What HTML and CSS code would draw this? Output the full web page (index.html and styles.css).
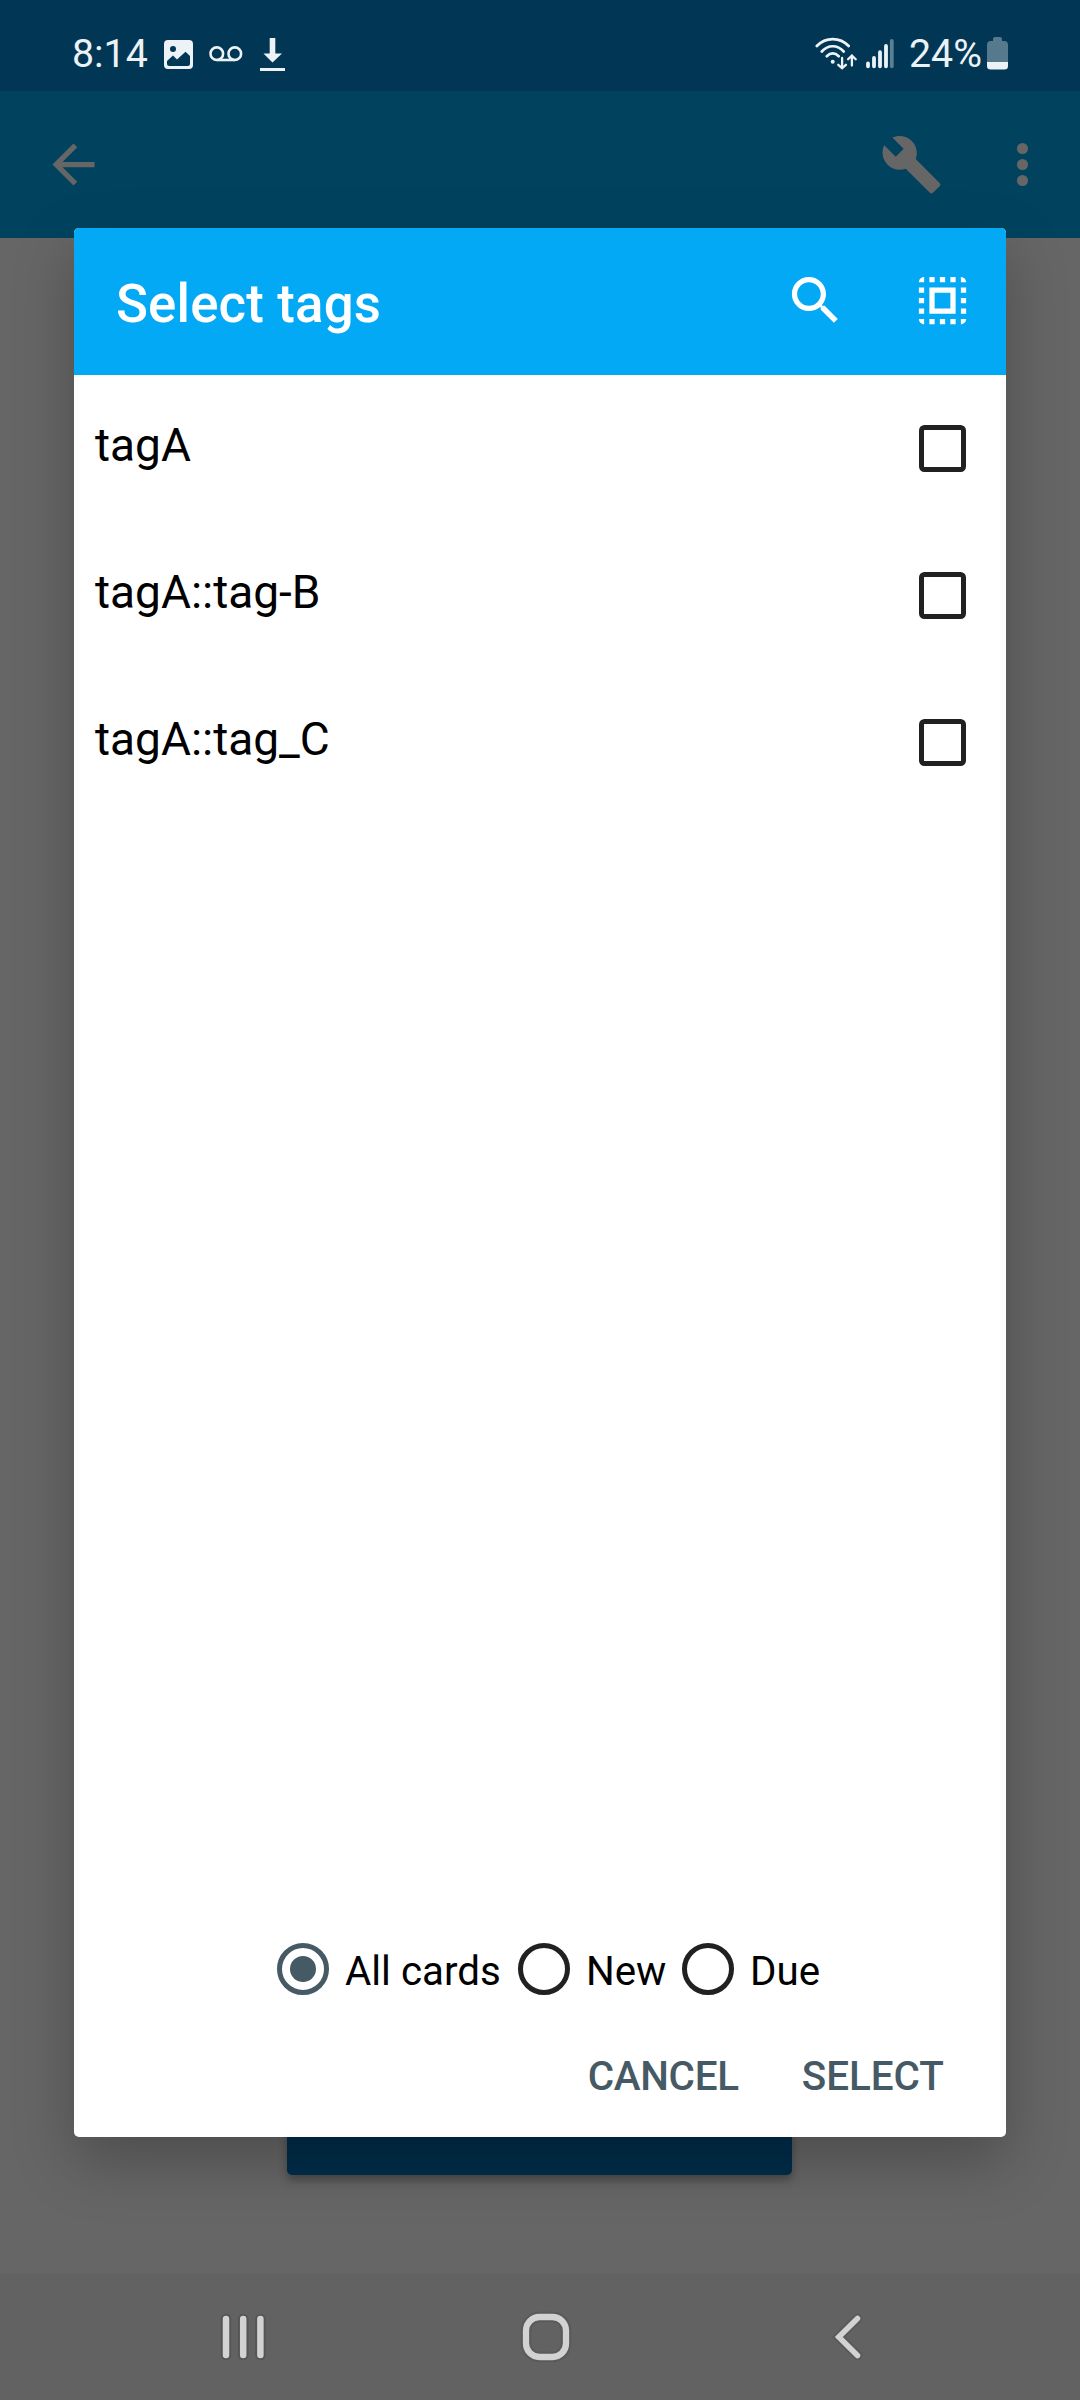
FILE: index.html
```html
<!DOCTYPE html>
<html lang="en">
<head>
<meta charset="utf-8">
<title>Select tags</title>
<link rel="stylesheet" href="styles.css">
</head>
<body>
<div class="screen">
  <header class="status">
    <div class="status-left">
      <span class="clock">8:14</span>
      <svg class="ic-photo" width="30" height="30" viewBox="0 0 30 30"><path fill-rule="evenodd" d="M4 0H25A4 4 0 0 1 29 4V25A4 4 0 0 1 25 29H4A4 4 0 0 1 0 25V4A4 4 0 0 1 4 0ZM9 6A3 3 0 1 0 9 12A3 3 0 1 0 9 6ZM3 21V23.500A2.500 2.500 0 0 0 5.500 26H23.500A2.500 2.500 0 0 0 26 23.500V16L21.500 11.800L13 19.500L9 15.500Z"/></svg>
      <svg class="ic-voice" width="34" height="16" viewBox="0 0 34 16"><g fill="none" stroke="currentColor" stroke-width="2.600"><circle cx="7.800" cy="7.700" r="6.300"/><circle cx="25.800" cy="7.700" r="6.300"/><path d="M7.800 14H25.800"/></g></svg>
      <svg class="ic-down" width="25" height="34" viewBox="0 0 25 34"><path d="M9.700 0H15.300V15.500H22L12.500 24.500L3.500 15.500H9.700ZM0 30H25V33H0Z"/></svg>
    </div>
    <div class="status-right">
      <svg class="ic-wifi" width="42" height="34" viewBox="0 0 42 34"><g fill="none" stroke="currentColor" stroke-width="2.700" stroke-linecap="round"><path d="M1.800 9C10.500-.3 25-.3 33.700 9M6.800 14.500C13 7.500 22.500 7.500 28.700 14.500M11.800 19.300C15.500 15.500 20 15.500 23.700 19.300"/><path stroke-width="2.300" d="M27.100 21V31M23.300 27.800L27.100 31.300L30.900 27.800M36.900 28.500V18.500M33.100 22.200L36.900 18.500L40.700 22.200"/></g><circle cx="17.700" cy="24.700" r="2"/></svg>
      <svg class="ic-signal" width="28" height="30" viewBox="0 0 28 30"><g fill="none" stroke="currentColor" stroke-width="3.800" stroke-linecap="round"><path d="M2 24.500V27.300M8 19V27.300M14 13.200V27.300M20 7V27.300"/><path opacity=".38" d="M25.800 2V27.300"/></g></svg>
      <span class="battery-text">24%</span>
      <svg class="ic-battery" width="21" height="33" viewBox="0 0 21 33"><path opacity=".36" d="M8 0H13Q15 0 15 2V4H18Q21 4.500 21 8V25H0V8Q0 4.500 3 4H6V2Q6 0 8 0Z"/><path d="M0 25H21V29Q21 32.500 17.500 32.500H3.500Q0 32.500 0 29Z"/></svg>
    </div>
  </header>

  <div class="appbar">
    <svg class="icon" viewBox="0 0 24 24"><path d="M20 11H7.830l5.590-5.590L12 4l-8 8 8 8 1.410-1.410L7.830 13H20v-2z"/></svg>
    <div class="appbar-actions">
      <svg class="icon" viewBox="0 0 24 24"><path d="M22.700 19l-9.100-9.100c.9-2.300.4-5-1.500-6.900-2-2-5-2.400-7.400-1.300L9 6 6 9 1.600 4.700C.4 7.100.9 10.100 2.900 12.100c1.900 1.900 4.600 2.400 6.900 1.500l9.100 9.100c.4.4 1 .4 1.400 0l2.300-2.300c.5-.4.5-1.100.1-1.400z"/></svg>
      <svg class="icon" viewBox="0 0 24 24"><circle cx="12" cy="5.900" r="2.100"/><circle cx="12" cy="12" r="2.100"/><circle cx="12" cy="18.100" r="2.100"/></svg>
    </div>
  </div>

  <main class="content"><div class="study-button"></div></main>

  <nav class="navbar">
    <svg width="46" height="50" viewBox="0 0 46 50"><g fill="none" stroke-linecap="round"><path stroke="#555" stroke-width="10.500" d="M6 7V43M23.200 7V43M40.400 7V43"/><path stroke="#d2d2d2" stroke-width="6.500" d="M6 7V43M23.200 7V43M40.400 7V43"/></g></svg>
    <svg class="home" width="52" height="52" viewBox="0 0 52 52"><g fill="none"><rect x="6" y="6" width="40" height="40" rx="13.500" stroke="#5a5a5a" stroke-width="10.500"/><rect x="6" y="6" width="40" height="40" rx="13.500" stroke="#d2d2d2" stroke-width="6.300"/></g></svg>
    <svg width="32" height="52" viewBox="0 0 32 52"><g fill="none" stroke-linecap="round"><path stroke="#5a5a5a" stroke-width="9.500" d="M25.500 7.500L6.800 26L25.500 44.500"/><path stroke="#d2d2d2" stroke-width="5.600" d="M25.500 7.500L6.800 26L25.500 44.500"/></g></svg>
  </nav>

  <section class="dialog">
    <div class="dialog-header">
      <h1>Select tags</h1>
      <div class="dialog-actions">
        <svg class="icon" viewBox="0 0 24 24"><path d="M15.500 14h-.79l-.28-.27C15.410 12.590 16 11.110 16 9.500 16 5.910 13.090 3 9.500 3S3 5.910 3 9.500 5.910 16 9.500 16c1.610 0 3.090-.59 4.230-1.570l.27.28v.79l5 4.990L20.490 19l-4.990-5zm-6 0C7.010 14 5 11.990 5 9.500S7.010 5 9.500 5 14 7.010 14 9.500 11.990 14 9.500 14z"/></svg>
        <svg class="icon" viewBox="0 0 24 24"><path d="M3 5h2V3c-1.100 0-2 .9-2 2zm0 8h2v-2H3v2zm4 8h2v-2H7v2zM3 9h2V7H3v2zm10-6h-2v2h2V3zm6 0v2h2c0-1.100-.9-2-2-2zM5 21v-2H3c0 1.100.9 2 2 2zm-2-4h2v-2H3v2zM9 3H7v2h2V3zm2 18h2v-2h-2v2zm8-8h2v-2h-2v2zm0 8c1.100 0 2-.9 2-2h-2v2zm0-12h2V7h-2v2zm0 8h2v-2h-2v2zm-4 4h2v-2h-2v2zm0-16h2V3h-2v2zM7 17h10V7H7v10zm2-8h6v6H9V9z"/></svg>
      </div>
    </div>
    <ul class="tags">
      <li><span>tagA</span><i class="checkbox"></i></li>
      <li><span>tagA::tag-B</span><i class="checkbox"></i></li>
      <li><span>tagA::tag_C</span><i class="checkbox"></i></li>
    </ul>
    <div class="filters">
      <div class="option all"><i class="radio checked"></i><span>All cards</span></div>
      <div class="option new"><i class="radio"></i><span>New</span></div>
      <div class="option"><i class="radio"></i><span>Due</span></div>
    </div>
    <div class="buttons"><span class="cancel">CANCEL</span><span>SELECT</span></div>
  </section>
</div>
</body>
</html>
```
FILE: styles.css
```css
* { box-sizing: border-box; }
body { margin: 0; font-family: Roboto, sans-serif; }
svg { display: block; flex: none; fill: currentColor; }
.screen {
  position: relative;
  display: flex;
  flex-direction: column;
  width: 1080px;
  height: 2400px;
  overflow: hidden;
  background: #666;
}
.icon { width: 63px; height: 63px; }

.status {
  display: flex;
  justify-content: space-between;
  height: 91px;
  padding: 0 72px;
  background: #013754;
  color: #ecf2f6;
  font-size: 39.3px;
  line-height: 46px;
}
.status-left, .status-right { display: flex; align-items: flex-start; }
.status-right { padding-right: 20px; }
.clock, .battery-text { margin-top: 31px; white-space: nowrap; }
.clock { width: 92px; }
.ic-photo { margin: 40px 15px 0 0; }
.ic-voice { margin: 46px 17px 0 0; }
.ic-down { margin-top: 38px; }
.ic-wifi { margin: 37px 9px 0 0; }
.ic-signal { margin: 39px 15px 0 0; }
.battery-text { width: 78px; }
.ic-battery { margin: 37px -20px 0 0; }

.appbar {
  display: flex;
  justify-content: space-between;
  align-items: center;
  height: 147px;
  padding: 0 26px 0 42px;
  background: #01435f;
  color: #666;
}
.appbar-actions { display: flex; gap: 48px; }

.content {
  flex: 1;
  display: flex;
  flex-direction: column;
  justify-content: flex-end;
  padding: 0 288px 99px 287px;
}
.study-button {
  height: 126px;
  border-radius: 5px;
  background: #002d4a;
  box-shadow: 0 5px 8px rgba(0, 0, 0, .3);
}

.navbar {
  display: flex;
  align-items: center;
  height: 126px;
  padding: 0 0 1px 220px;
  background: #626262;
}
.home { margin: 0 260px 0 254px; }

.dialog {
  position: absolute;
  left: 74px;
  top: 228px;
  display: flex;
  flex-direction: column;
  width: 932px;
  height: 1909px;
  overflow: hidden;
  border-radius: 5px;
  background: #fff;
  color: #000;
  box-shadow: 0 24px 60px rgba(0, 0, 0, .25);
}
.dialog-header {
  display: flex;
  align-items: center;
  justify-content: space-between;
  height: 147px;
  padding: 0 32px 0 42px;
  background: #04a9f5;
  color: #fff;
}
.dialog-header h1 {
  margin: 0;
  padding-top: 5px;
  font-size: 52.8px;
  font-weight: 500;
  line-height: 62px;
  letter-spacing: .15px;
}
.dialog-actions { display: flex; gap: 64px; padding-bottom: 2px; }

.tags { flex: 1; margin: 0; padding: 0; list-style: none; }
.tags li {
  display: flex;
  align-items: center;
  justify-content: space-between;
  height: 147px;
  padding: 0 40px 0 21px;
  font-size: 46px;
  line-height: 54px;
}
.tags span { padding-bottom: 8px; }
.checkbox { width: 47px; height: 47px; margin-bottom: 1px; border: 5px solid #212121; border-radius: 5.5px; }

.filters { display: flex; height: 84px; padding-left: 203px; font-size: 40.3px; line-height: 48px; }
.option { display: flex; align-items: center; }
.option span { padding-top: 5px; }
.all { width: 241px; }
.new { width: 164px; }
.radio {
  display: flex;
  align-items: center;
  justify-content: center;
  width: 52px;
  height: 52px;
  margin-right: 16px;
  border: 5px solid #212121;
  border-radius: 50%;
}
.checked { border-color: #455a64; }
.checked::after { content: ""; width: 26px; height: 26px; border-radius: 50%; background: #455a64; }

.buttons {
  display: flex;
  justify-content: flex-end;
  gap: 63px;
  height: 126px;
  padding: 42px 62px 0 0;
  color: #455a64;
  font-size: 40.4px;
  font-weight: 500;
  line-height: 48px;
}
.cancel { letter-spacing: -.3px; }
```
